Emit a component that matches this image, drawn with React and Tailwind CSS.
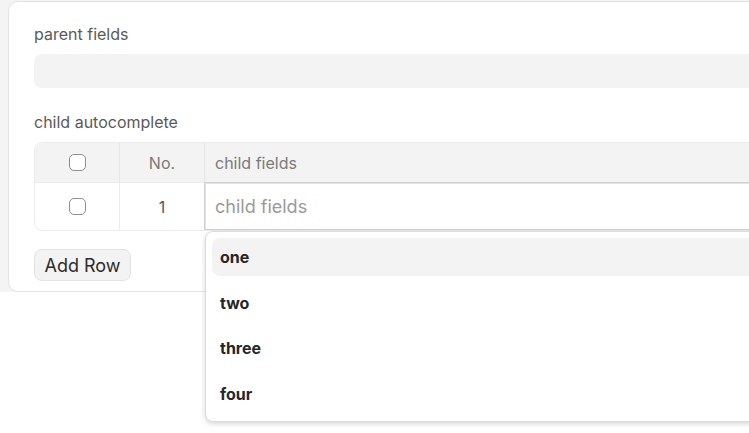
import React from 'react';

const OPTIONS = ['one', 'two', 'three', 'four'];

function Checkbox() {
  return <span className="block h-[17px] w-[17px] rounded-[5px] border border-[#8f8f8f] bg-white" />;
}

export default function App() {
  return (
    <div className="h-screen w-full overflow-hidden font-['Inter','Noto_Sans',sans-serif]">
      <div className="bg-[#f4f4f4] pl-2 pt-px">
        <div className="relative w-[1000px] rounded-[10px] border border-[#e3e3e3] bg-white pb-[10px] pl-[25px] pt-[22px]">
          <p className="text-[16px] leading-5 text-[#5a5a5a]">parent fields</p>
          <div className="mt-[10px] h-[34px] rounded-lg bg-[#f3f3f3]" />

          <p className="mt-[24px] text-[16px] leading-5 text-[#5a5a5a]">child autocomplete</p>

          {/* table */}
          <div className="mt-[10px] rounded-lg border border-[#ececec]">
            <div className="flex h-[39px] rounded-t-lg bg-[#f3f3f3] text-[16px] text-[#7a7a7a]">
              <div className="flex w-[85px] items-center justify-center border-r border-[#e6e6e6]">
                <Checkbox />
              </div>
              <div className="flex w-[85px] items-center justify-center border-r border-[#e6e6e6]">No.</div>
              <div className="flex flex-1 items-center pl-[10px]">child fields</div>
            </div>
            <div className="flex h-[48px] border-t border-[#ececec]">
              <div className="flex w-[85px] items-center justify-center border-r border-[#ececec]">
                <Checkbox />
              </div>
              <div className="flex w-[85px] items-center justify-center border-r border-[#ececec] text-[16px] text-[#555]">1</div>
              <div className="relative flex-1">
                <div className="-ml-px -mt-px flex h-[48px] items-center border border-[#cfcfcf] bg-white pl-[10px] text-[18px] text-[#9a9a9a] shadow-[inset_1px_1px_0_#e4e4e4]">
                  child fields
                </div>
                {/* dropdown */}
                <div className="absolute left-0 top-[48px] z-10 flex w-[700px] flex-col gap-[7.6px] rounded-lg border border-[#dcdcdc] bg-white px-[6px] pb-[8px] pt-[6px] shadow-[0_2px_5px_rgba(0,0,0,0.16)]">
                  {OPTIONS.map((o, i) => (
                    <div
                      key={o}
                      className={`flex h-[38px] items-center rounded-lg pl-2 text-[16px] font-bold text-[#262626] ${i === 0 ? 'bg-[#f3f3f3]' : ''}`}
                    >
                      {o}
                    </div>
                  ))}
                </div>
              </div>
            </div>
          </div>

          <button className="mt-[18px] h-[32px] w-[97px] rounded-lg border border-[#e2e2e2] bg-[#f3f3f3] text-[18px] text-[#2b2b2b]">
            Add Row
          </button>
        </div>
      </div>
    </div>
  );
}
